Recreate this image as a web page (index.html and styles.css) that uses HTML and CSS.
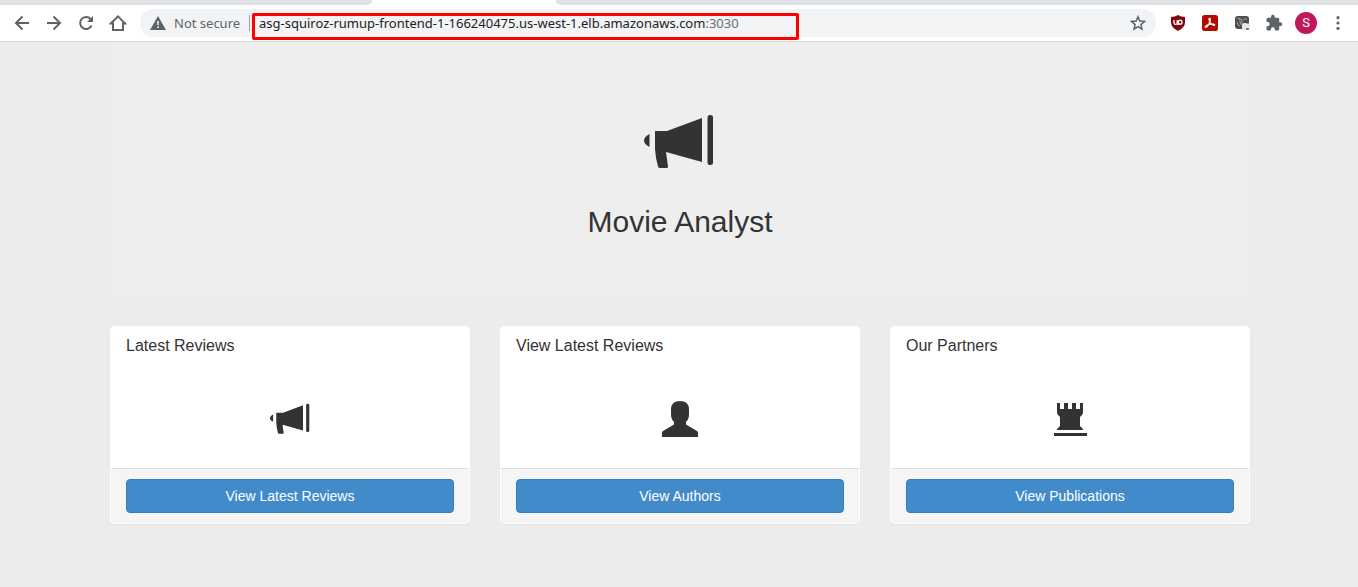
FILE: index.html
```html
<!DOCTYPE html>
<html lang="en">
<head>
<meta charset="utf-8">
<meta name="viewport" content="width=device-width, initial-scale=1">
<title>Movie Analyst</title>
<link rel="stylesheet" href="styles.css">
</head>
<body>
<svg class="defs" aria-hidden="true">
  <symbol id="bullhorn" viewBox="0 0 72 56">
    <path d="M5.500 20v13C2 31 0 29 0 26.500S2 22 5.500 20z"/>
    <path d="M11 17h12L58 4v44L22 38l2 14.500Q24 54 22.500 54H16q-1.500 0-2-1.500Q11.500 44 11 35z"/>
    <rect x="63.500" y="1" width="5.500" height="50" rx="2.500"/>
  </symbol>
</svg>

<div class="browser">
  <div class="tabs"><span class="tab-left"></span><span class="tab-right"></span></div>
  <div class="toolbar">
    <nav class="nav">
      <button class="icon-btn" aria-label="Back"><svg width="16" height="16" viewBox="0 0 16 16"><path class="line" d="M15 8H2M8.500 1.500 2 8l6.500 6.500"/></svg></button>
      <button class="icon-btn" aria-label="Forward"><svg width="16" height="16" viewBox="0 0 16 16"><path class="line" d="M1 8h13M7.500 1.500 14 8l-6.500 6.500"/></svg></button>
      <button class="icon-btn" aria-label="Reload"><svg width="16" height="16" viewBox="0 0 16 16"><path class="line" d="M13.600 10.500A6 6 0 1 1 12.600 4"/><path d="M15 1v6H9z"/></svg></button>
      <button class="icon-btn" aria-label="Home"><svg width="18" height="18" viewBox="0 0 18 18"><path class="line" d="M1.800 9.500 9 2.300l7.200 7.200H14V16H4V9.500z"/></svg></button>
    </nav>
    <div class="omnibox">
      <svg class="warn" width="16" height="14" viewBox="0 0 16 14"><path fill-rule="evenodd" d="M8 0 16 14H0zM7.200 5v4h1.600V5zM7.200 10.300V12h1.600v-1.700z"/></svg>
      <span class="security">Not secure</span>
      <span class="divider"></span>
      <div class="address">
        <input class="host" type="text" aria-label="Address" value="asg-squiroz-rumup-frontend-1-166240475.us-west-1.elb.amazonaws.com"><span class="port">:3030</span>
        <span class="highlight"></span>
      </div>
      <button class="star" aria-label="Bookmark"><svg width="16" height="16" viewBox="0 0 16 16"><path class="thin" d="m8 1.800 1.800 4.300 4.700.4-3.600 3.100 1.100 4.600L8 11.700l-4 2.500 1.100-4.600-3.600-3.100 4.700-.4z"/></svg></button>
    </div>
    <div class="extensions">
      <button class="icon-btn" aria-label="uBlock Origin"><svg width="16" height="16" viewBox="0 0 16 16"><path fill="#800610" d="M8 0q3 2 7 2v5.500q0 5-7 8.500-7-3.500-7-8.500V2q4 0 7-2z"/><path fill="none" stroke="#fff" stroke-width="1.300" d="M4 5v3q0 1.400 1.500 1.400T7.200 8V5M7.200 9.400H9M12 7.200a1.800 2 0 1 1-3.600 0 1.800 2 0 0 1 3.600 0z"/></svg></button>
      <button class="icon-btn" aria-label="Adobe Acrobat"><svg width="16" height="16" viewBox="0 0 16 16"><rect width="16" height="16" rx="2.500" fill="#b30b00"/><path fill="none" stroke="#fff" stroke-width="1.200" d="M7.300 3.300c1.300-.4 1.200 1.500.6 3.200C7 9 5 12.500 3.500 12.300c-1-.3.500-2.300 4-3 3-.6 5.500-.3 5.200.8-.5 1-3.300-.5-4.600-2.600-1-1.700-1.500-3.900-.8-4.200z"/></svg></button>
      <button class="icon-btn" aria-label="Extension"><svg width="16" height="16" viewBox="0 0 16 16"><rect x="1" y="1" width="14" height="13" rx="3" fill="#4b4d50"/><path fill="none" stroke="#a5a7a9" stroke-width="1" d="M3 4q3-2 3 2t2 4M5 3.500q4 0 3 5M9 5q2-3 4 0M3 7q0 3 3 4"/><path fill="#e8e8e8" d="M8 10q0-2 2-2h2q1 1 4 0v5q0 2-2 2H9q-1 0-1-2z"/><path fill="#77797c" d="M12 13h3v1q0 1-1 1h-2z"/></svg></button>
      <button class="icon-btn" aria-label="Extensions"><svg width="18" height="18" viewBox="0 0 24 24"><path d="M20.500 11H19V7a2 2 0 0 0-2-2h-4V3.500a2.500 2.500 0 0 0-5 0V5H4a2 2 0 0 0-2 2v3.800h1.500a2.700 2.700 0 0 1 0 5.400H2V20a2 2 0 0 0 2 2h3.800v-1.500a2.700 2.700 0 0 1 5.400 0V22H17a2 2 0 0 0 2-2v-4h1.500a2.500 2.500 0 0 0 0-5z"/></svg></button>
      <button class="avatar" aria-label="Profile">S</button>
      <button class="icon-btn" aria-label="Menu"><svg width="16" height="16" viewBox="0 0 16 16"><circle cx="8" cy="2.700" r="1.600"/><circle cx="8" cy="8" r="1.600"/><circle cx="8" cy="13.300" r="1.600"/></svg></button>
    </div>
  </div>
</div>

<main class="page">
  <header class="hero">
    <svg class="hero-icon" width="72" height="56"><use href="#bullhorn"/></svg>
    <h1 class="hero-title">Movie Analyst</h1>
  </header>
  <div class="cards">
    <section class="card">
      <h2 class="card-title">Latest Reviews</h2>
      <div class="card-icon"><svg width="41" height="32"><use href="#bullhorn"/></svg></div>
      <div class="card-footer"><a class="btn" href="#reviews">View Latest Reviews</a></div>
    </section>
    <section class="card">
      <h2 class="card-title">View Latest Reviews</h2>
      <div class="card-icon"><svg width="36" height="36" viewBox="0 0 36 36"><path d="M18 0c6 0 9 3.500 9 8v5c0 4-1 6-3 8v2.500l11 6.500q1 1 1 2v4H0v-4q0-1 1-2l11-6.500V21c-2-2-3-4-3-8V8c0-4.500 3-8 9-8z"/></svg></div>
      <div class="card-footer"><a class="btn" href="#authors">View Authors</a></div>
    </section>
    <section class="card">
      <h2 class="card-title">Our Partners</h2>
      <div class="card-icon"><svg width="34" height="34" viewBox="0 0 34 34"><path d="M4 1h3v6h4V1h4v6h4V1h4v6h4V1h3v9q0 2-1 3l-2 2v9l3 3v1H4v-1l3-3v-9l-2-2q-1-1-1-3zM1 31h33v3H1z"/></svg></div>
      <div class="card-footer"><a class="btn" href="#publications">View Publications</a></div>
    </section>
  </div>
</main>
</body>
</html>
```

FILE: styles.css
```css
* { box-sizing: border-box; }

body {
  margin: 0;
  min-height: 100vh;
  background: #ececec;
  color: #333;
  font-family: "Liberation Sans", Arial, sans-serif;
}

button, input {
  margin: 0;
  padding: 0;
  border: 0;
  background: none;
  font: inherit;
  color: inherit;
}

svg { display: block; fill: currentColor; }
.defs { position: absolute; width: 0; height: 0; }
.line { fill: none; stroke: currentColor; stroke-width: 2; }
.thin { fill: none; stroke: currentColor; stroke-width: 1.5; }

/* Browser chrome */
.browser {
  background: #fff;
  border-bottom: 1px solid #d8d8d8;
  color: #5f6368;
  font: 13px/20px "Noto Sans", "Open Sans", sans-serif;
}

.tabs { display: flex; justify-content: space-between; gap: 184px; height: 5px; }
.tab-left { flex: 0 0 372px; background: #dee1e6; border-bottom-right-radius: 6px; }
.tab-right { flex: 1; background: #dee1e6; border-bottom-left-radius: 6px; }

.toolbar { display: flex; align-items: center; gap: 6px; height: 36px; padding: 0 4px 0 6px; }
.nav, .extensions { display: flex; align-items: center; }
.icon-btn { display: grid; place-items: center; width: 32px; height: 28px; }

.omnibox {
  display: flex;
  flex: 1;
  align-items: center;
  min-width: 0;
  height: 28px;
  padding: 0 10px;
  border-radius: 14px;
  background: #f1f3f4;
}
.warn { flex: none; }
.security { flex: 0 0 67px; margin: 0 8px; white-space: nowrap; }
.divider { width: 1px; height: 16px; background: #9aa0a6; }
.address {
  position: relative;
  display: flex;
  flex: 0 1 547px;
  align-items: center;
  min-width: 0;
  height: 20px;
  margin-left: 2px;
  padding-left: 7px;
}
.host { field-sizing: content; min-width: 0; height: 20px; color: #202124; }
.port { color: #6b6f74; }
.highlight {
  position: absolute;
  inset: 0 0 -7px;
  border: 3px solid #f00;
  border-radius: 2px;
  pointer-events: none;
}
.star { margin-left: auto; }
.avatar {
  width: 22px;
  height: 22px;
  margin: 0 5px;
  border-radius: 50%;
  background: #c2185b;
  color: #fff;
  font: 13px/22px Roboto, sans-serif;
}

/* Page */
.page { padding-left: 2px; }

.hero {
  display: flex;
  flex-direction: column;
  align-items: center;
  gap: 34px;
  max-width: 1140px;
  margin: 0 auto 30px;
  padding: 72px 16px 56px;
  border-radius: 0 0 6px 6px;
  background: #eee;
}
.hero-title { margin: 0; font-size: 30px; font-weight: 400; line-height: 36px; }

.cards {
  display: grid;
  grid-template-columns: repeat(3, 1fr);
  gap: 30px;
  max-width: 1140px;
  margin: 0 auto;
}
.card {
  border: 1px solid #fff;
  border-radius: 4px;
  background: #fff;
  box-shadow: 0 1px 1px rgba(0, 0, 0, 0.05);
  overflow: hidden;
}
.card-title { margin: 0; padding: 10px 15px; font-size: 16px; font-weight: 400; line-height: 18px; }
.card-icon { display: grid; place-items: center; height: 103px; padding-top: 4px; }
.card-footer { padding: 10px 15px; border-top: 1px solid #ddd; background: #f5f5f5; }
.btn {
  display: block;
  padding: 6px 12px;
  border: 1px solid #357ebd;
  border-radius: 4px;
  background: #428bca;
  color: #fff;
  font-size: 14px;
  line-height: 20px;
  text-align: center;
  text-decoration: none;
}
```
